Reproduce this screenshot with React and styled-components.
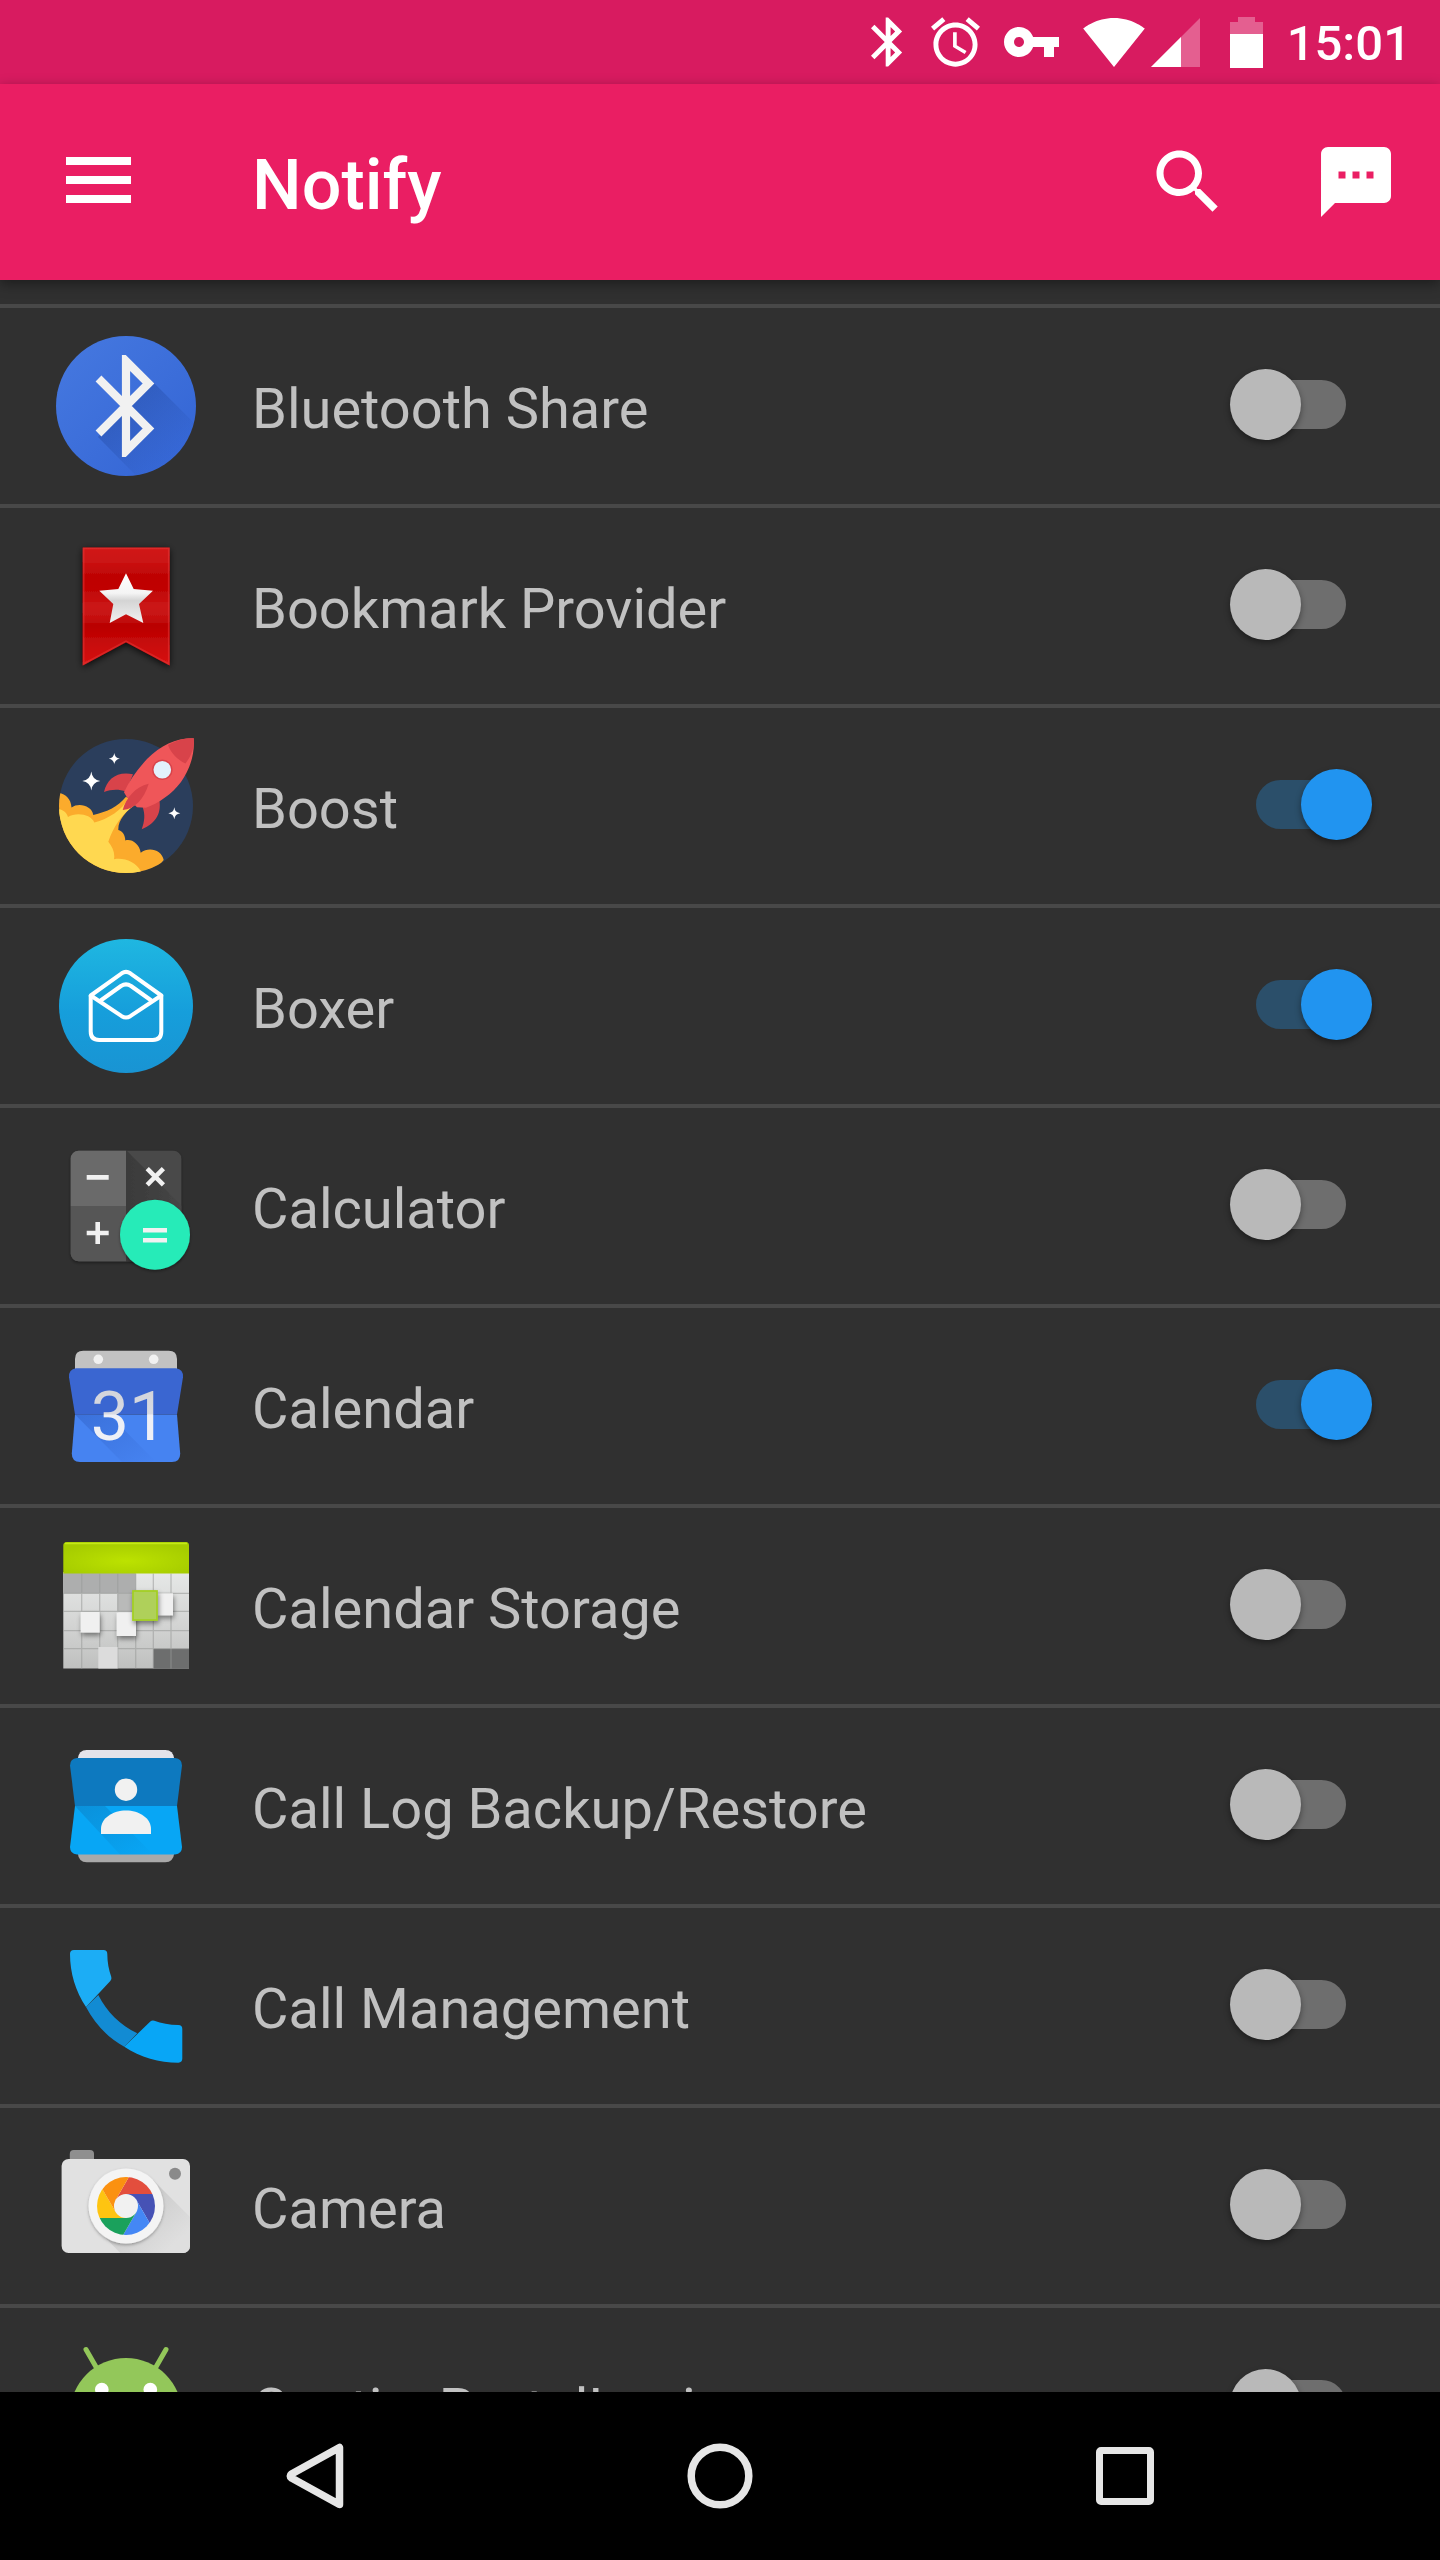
import React, { useState } from "react";
import styled, { createGlobalStyle } from "styled-components";

const PINK = "#ea1e63";
const PINK_DARK = "#d81b60";
const ACCENT = "#2194f0";

const GlobalStyle = createGlobalStyle`
  * {
    box-sizing: border-box;
  }

  body {
    margin: 0;
    background: #303030;
    font-family: Roboto, "Noto Sans", sans-serif;
  }
`;

const Screen = styled.div`
  display: flex;
  flex-direction: column;
  height: 100vh;
  background: #303030;
`;

const StatusBar = styled.div`
  flex: none;
  display: flex;
  align-items: center;
  justify-content: flex-end;
  gap: 24px;
  height: 84px;
  padding-right: 29px;
  background: ${PINK_DARK};
  color: #fff;
`;

const Signals = styled.div`
  display: flex;
  gap: 6px;
`;

const Clock = styled.time`
  padding-top: 4px;
  font-size: 49px;
  font-weight: 500;
  line-height: 60px;
`;

const AppBar = styled.header`
  position: relative;
  z-index: 1;
  flex: none;
  display: flex;
  align-items: center;
  height: 196px;
  background: ${PINK};
  color: #fff;
  box-shadow: 0 4px 12px rgba(0, 0, 0, 0.4);
`;

const BarButton = styled.button`
  display: flex;
  align-items: center;
  justify-content: center;
  width: ${props => (props.$wide ? "196px" : "168px")};
  height: 196px;
  padding: 0;
  border: 0;
  background: none;
  color: inherit;
  cursor: pointer;
`;

const Title = styled.h1`
  flex: 1;
  margin: 0;
  padding: 6px 0 0 56px;
  font-size: 70px;
  font-weight: 500;
  line-height: 84px;
`;

const AppList = styled.ul`
  flex: 1;
  min-height: 0;
  margin: 0;
  padding: 24px 0 0;
  list-style: none;
  overflow-y: auto;
  scrollbar-width: none;
`;

const AppRow = styled.li`
  display: flex;
  align-items: center;
  height: 200px;
  padding: 0 68px 0 56px;
  border-top: 4px solid #484848;
`;

const AppIcon = styled.svg`
  flex: none;
  width: 140px;
  height: 140px;
`;

const AppName = styled.label`
  flex: 1;
  padding: 6px 0 0 56px;
  color: #c1c1c1;
  font-size: 56px;
  line-height: 72px;
`;

const Switch = styled.input`
  appearance: none;
  flex: none;
  display: grid;
  align-items: center;
  width: 142px;
  height: 71px;
  margin: 0 0 3px;
  cursor: pointer;

  &::before,
  &::after {
    content: "";
    grid-area: 1 / 1;
  }

  &::before {
    justify-self: center;
    width: 90px;
    height: 49px;
    border-radius: 25px;
    background: #6e6e6e;
  }

  &::after {
    justify-self: start;
    width: 71px;
    height: 71px;
    border-radius: 50%;
    background: #b9b9b9;
    box-shadow: 0 3px 6px rgba(0, 0, 0, 0.4);
  }

  &:checked::before {
    background: #2b4f6a;
  }

  &:checked::after {
    justify-self: end;
    background: ${ACCENT};
  }
`;

const NavBar = styled.nav`
  flex: none;
  display: flex;
  height: 168px;
  padding: 0 112px;
  background: #000;
`;

const NavButton = styled.button`
  flex: 1;
  display: flex;
  align-items: center;
  justify-content: center;
  padding: 0;
  border: 0;
  background: none;
  color: #e6e6e6;
  cursor: pointer;
`;

const BluetoothShareIcon = () => (
  <AppIcon viewBox="0 0 140 140" aria-hidden="true">
    <defs>
      <linearGradient id="bt-disc" x1="0" y1="0" x2="1" y2="1">
        <stop offset="0" stopColor="#4679e0" />
        <stop offset="1" stopColor="#3364d4" />
      </linearGradient>
      <linearGradient id="bt-shade" x1="0.2" y1="0.2" x2="0.8" y2="0.8">
        <stop offset="0" stopColor="#1b3d8f" stopOpacity="0.35" />
        <stop offset="0.75" stopColor="#1b3d8f" stopOpacity="0" />
      </linearGradient>
      <clipPath id="bt-clip">
        <circle cx="70" cy="70" r="70" />
      </clipPath>
      <clipPath id="bt-glyph">
        <rect x="30" y="19" width="80" height="102" />
      </clipPath>
    </defs>
    <circle cx="70" cy="70" r="70" fill="url(#bt-disc)" />
    <path
      clipPath="url(#bt-clip)"
      fill="url(#bt-shade)"
      d="M98 47l62 62v51H100L42 101 70 70z"
    />
    <path
      clipPath="url(#bt-glyph)"
      d="M42.5 42.5l50 50L70 115V25l22.5 22.5-50 50"
      fill="none"
      stroke="#f1f1f1"
      strokeWidth="8.2"
      strokeMiterlimit="10"
    />
  </AppIcon>
);

const BookmarkIcon = () => (
  <AppIcon viewBox="0 0 140 140" aria-hidden="true">
    <defs>
      <linearGradient id="bm-ribbon" x1="0" y1="0" x2="0" y2="1">
        <stop offset="0" stopColor="#d11a1a" />
        <stop offset="0.12" stopColor="#cb1313" />
        <stop offset="0.24" stopColor="#be0404" />
        <stop offset="0.36" stopColor="#c00505" />
        <stop offset="0.5" stopColor="#cb1616" />
        <stop offset="0.6" stopColor="#c51010" />
        <stop offset="0.66" stopColor="#b90202" />
        <stop offset="0.8" stopColor="#c60808" />
        <stop offset="1" stopColor="#d81414" />
      </linearGradient>
      <linearGradient id="bm-star" x1="0" y1="0" x2="0" y2="1">
        <stop offset="0" stopColor="#ffffff" />
        <stop offset="0.4" stopColor="#f4f4f4" />
        <stop offset="0.55" stopColor="#d4d4d4" />
        <stop offset="1" stopColor="#f2f2f2" />
      </linearGradient>
      <filter id="bm-shadow" x="-20%" y="-20%" width="140%" height="140%">
        <feDropShadow dx="0" dy="2" stdDeviation="3.500" floodOpacity="0.8" />
      </filter>
    </defs>
    <path
      filter="url(#bm-shadow)"
      d="M26.7 11.5h87v118L70 106.3l-43.3 23.2z"
      fill="url(#bm-ribbon)"
    />
    <path
      d="M27.7 12.5h85v115.3L70 105.2l-42.3 22.6z"
      fill="none"
      stroke="#e53a3a"
      strokeOpacity="0.5"
      strokeWidth="1.6"
    />
    <path
      d="M70 37.3l7.7 15.7L97 54.7 83 68l4.3 19L70 78.3 53.7 87l3.6-19-14-13.3L62.3 53z"
      fill="url(#bm-star)"
    />
  </AppIcon>
);

const BoostIcon = () => (
  <AppIcon viewBox="0 0 140 140" aria-hidden="true">
    <defs>
      <clipPath id="boost-clip">
        <circle cx="70" cy="70" r="67" />
      </clipPath>
    </defs>
    <circle cx="70" cy="70" r="67" fill="#2b3e5c" />
    <g clipPath="url(#boost-clip)">
      <path
        fill="#fbab2c"
        d="M0 57c8-1 15 5 15.500 14.500C23 66 36 70 37.300 79 50 76 62 71 70 60.700L80 68C70 75 62 84 62.300 94c4 1 7 5 7 10.500 6-2 14 3 15.400 12.200C93 110 106 114 107.700 124L90 145H0z"
      />
      <path
        fill="#ffd850"
        d="M0 73c5 0 10 2 12 8 8-5 23-3 26.300 5.500C52 83 67 74 72 62l8 6C66 77 57 92 52.300 105.700c4 5 7 11 5.700 17.600 9-2 22 2 27 12.400V145H0z"
      />
    </g>
    <g fill="#fff">
      <path d="M35.300 35.500q1 8.500 9 9.500-8 1-9 9.500-1-8.500-9-9.500 8-1 9-9.500z" />
      <path d="M58.300 17q.6 5 5.500 5.700-4.900.7-5.500 5.700-.6-5-5.500-5.700 4.900-.7 5.500-5.700z" />
      <path d="M118.300 71.300q.6 5.300 6 6-5.400.7-6 6-.6-5.300-6-6 5.400-.7 6-6z" />
    </g>
    <path
      fill="#d8434a"
      d="M48 56c3-13 13-21 29-17.700L70 55.700c-8-3-15-2-22 .3zM103 62c3 14-2 25-17.300 31.300 3-8 3.500-15 1-22z"
    />
    <path
      fill="#ef5659"
      d="M137.700 2.300C120 2 105 9 91 23 81 34 73 45 68 56.300l3 5.200 10 9.800 9 .4C103 67 116 58 125 46c9-13 14-28 12.700-43.700z"
    />
    <path
      fill="#d8434a"
      d="M137.700 2.300C128 2 120 4.500 112 9c3 8 9 14.500 17.500 18.500 6-8 9-16 8.200-25.200zM92.700 47.700C79 51 70 62 66.700 74 79 73 88 63 92.700 47.700z"
    />
    <circle cx="106.300" cy="33.700" r="10.300" fill="#d8434a" />
    <circle cx="106.300" cy="33.700" r="8.800" fill="#e2f1fc" />
  </AppIcon>
);

const BoxerIcon = () => (
  <AppIcon viewBox="0 0 140 140" aria-hidden="true">
    <defs>
      <linearGradient id="boxer-disc" x1="0" y1="0" x2="0" y2="1">
        <stop offset="0" stopColor="#1fb7e1" />
        <stop offset="0.55" stopColor="#169edb" />
        <stop offset="1" stopColor="#1994d3" />
      </linearGradient>
    </defs>
    <circle cx="70" cy="70" r="67" fill="url(#boxer-disc)" />
    <g fill="none" stroke="#fff" strokeWidth="4" strokeLinejoin="round">
      <path d="M34.700 59.500v36q0 8.500 8.500 8.500h53.600q8.500 0 8.500-8.500v-36" />
      <path d="M34.700 59.500l31-22.200q4.300-2.800 8.600 0l31 22.200-31 20.700q-4.300 2.600-8.600 0z" />
      <path d="M44 65l21-15q5-3.200 10 0l21 15" />
    </g>
  </AppIcon>
);

const CalculatorIcon = () => (
  <AppIcon viewBox="0 0 140 140" aria-hidden="true">
    <defs>
      <clipPath id="calc-clip">
        <rect x="14.700" y="14.700" width="110.600" height="110.600" rx="8" />
      </clipPath>
      <linearGradient id="calc-shade" x1="0" y1="0" x2="1" y2="0">
        <stop offset="0" stopColor="#3a3a3a" />
        <stop offset="1" stopColor="#464646" />
      </linearGradient>
      <filter id="calc-shadow" x="-20%" y="-20%" width="140%" height="140%">
        <feDropShadow dx="0" dy="1.5" stdDeviation="1.5" floodOpacity="0.4" />
      </filter>
    </defs>
    <g filter="url(#calc-shadow)">
      <g clipPath="url(#calc-clip)">
        <path d="M14 14h112v112H14z" fill="#484848" />
        <path d="M70 14l56 56v56H70z" fill="url(#calc-shade)" />
        <path d="M14 14h56v56H14z" fill="#6b6b6b" />
        <path d="M14 70h56v56H14z" fill="#575757" />
      </g>
    </g>
    <circle
      cx="99"
      cy="98.700"
      r="35"
      fill="#26ebb8"
      filter="url(#calc-shadow)"
    />
    <g fill="none" stroke="#f1f1f1" strokeWidth="4.600">
      <path d="M30.700 41.400h22M30.700 97h22M41.700 86v22" />
      <path d="M91.200 32.600l16.200 16.200M107.400 32.600L91.200 48.800" />
      <path d="M87 94.200h24M87 104.200h24" />
    </g>
  </AppIcon>
);

const CalendarIcon = () => (
  <AppIcon viewBox="0 0 140 140" aria-hidden="true">
    <defs>
      <linearGradient
        id="cal-ink"
        gradientUnits="userSpaceOnUse"
        x1="0"
        y1="52"
        x2="0"
        y2="104"
      >
        <stop offset="0" stopColor="#d2d4da" />
        <stop offset="0.5" stopColor="#d8dae2" />
        <stop offset="0.52" stopColor="#eef0f6" />
        <stop offset="1" stopColor="#eef0f6" />
      </linearGradient>
      <linearGradient id="cal-shade" x1="0" y1="0" x2="1" y2="1">
        <stop offset="0" stopColor="#2f5fc4" stopOpacity="0.5" />
        <stop offset="1" stopColor="#2f5fc4" stopOpacity="0" />
      </linearGradient>
    </defs>
    <path d="M19 36V23q0-8.300 8.300-8.300h85.400q8.300 0 8.300 8.300v13z" fill="#c2c2c2" />
    <circle cx="42.300" cy="23.300" r="4.800" fill="#f1f1f1" />
    <circle cx="97.700" cy="23.300" r="4.800" fill="#f1f1f1" />
    <path
      d="M19 78.500h102l3.200 39q0 8.500-8.200 8.500H24q-8.200 0-8.200-8.500z"
      fill="#4683f1"
    />
    <path d="M19 78.500h34l47 47.500H66z" fill="url(#cal-shade)" />
    <path
      d="M20 32.300h100q7.500 1 7 9l-6 37.200H19L13 41.300q-.5-8 7-9z"
      fill="#3a66d1"
    />
    <text
      x="73"
      y="103.500"
      textAnchor="middle"
      fontFamily="Roboto, sans-serif"
      fontSize="68"
      fill="url(#cal-ink)"
    >
      31
    </text>
  </AppIcon>
);

const CalendarStorageIcon = () => (
  <AppIcon viewBox="0 0 140 140" aria-hidden="true">
    <defs>
      <linearGradient id="cs-cells" x1="0" y1="0" x2="0" y2="1">
        <stop offset="0" stopColor="#e6e8e7" />
        <stop offset="0.5" stopColor="#d5d6d5" />
        <stop offset="1" stopColor="#bfc0bf" />
      </linearGradient>
      <radialGradient id="cs-head" cx="0.5" cy="0.6" r="0.6">
        <stop offset="0" stopColor="#bce200" />
        <stop offset="1" stopColor="#a6cc00" />
      </radialGradient>
      <filter id="cs-shadow" x="-40%" y="-40%" width="180%" height="200%">
        <feDropShadow dx="1" dy="3" stdDeviation="2.500" floodOpacity="0.45" />
      </filter>
    </defs>
    <rect x="7.300" y="36" width="125.700" height="96.500" fill="url(#cs-cells)" />
    <path d="M7.300 37h72.400v20.300H7.300z" fill="#adaeae" />
    <path d="M61.700 57.300h18v18h-18z" fill="#b9bab9" />
    <path d="M97.300 112.700H133v19.800H97.300z" fill="#6d6e6e" />
    <path
      d="M25.700 37.500v95M43.700 37.500v95M61.700 37.500v95M79.700 37.500v95M97.300 37.500v95M115 37.500v95M7.300 57.300H133M7.300 75.300H133M7.300 94.700H133M7.300 112.700H133"
      stroke="#9a9b9a"
      strokeOpacity="0.6"
      strokeWidth="1.200"
    />
    <path
      d="M7.300 37.500V9.500q0-3.500 3.500-3.500H130q3 0 3 3.500v28z"
      fill="url(#cs-head)"
    />
    <path d="M9 7.500h122" stroke="#c4e818" strokeWidth="1.500" />
    <rect x="42.300" y="111" width="19.300" height="21.500" fill="#dcdcdc" />
    <g filter="url(#cs-shadow)" fill="#f0f0f0">
      <rect x="24.700" y="76" width="19" height="20.500" />
      <rect x="60.700" y="76.300" width="19.300" height="23.700" />
      <rect x="101.300" y="57.300" width="15.700" height="22" />
    </g>
    <rect
      x="77"
      y="55"
      width="24"
      height="29"
      fill="#afd05a"
      stroke="#a3cf24"
      strokeWidth="1.800"
      filter="url(#cs-shadow)"
    />
  </AppIcon>
);

const ContactsIcon = () => (
  <AppIcon viewBox="0 0 140 140" aria-hidden="true">
    <defs>
      <linearGradient id="ct-shade" x1="0" y1="0" x2="1" y2="1">
        <stop offset="0" stopColor="#0b82c8" stopOpacity="0.6" />
        <stop offset="1" stopColor="#0b82c8" stopOpacity="0" />
      </linearGradient>
    </defs>
    <path d="M21.700 30v-7q1-9 9-9h78.600q8 0 9 9v7z" fill="#e3e3ea" />
    <path d="M21.700 110v7q1 9.300 9 9.300h78.600q8 0 9-9.300v-7z" fill="#a9a9a9" />
    <path
      d="M19 70h102l5 41q0 7-7 7.500H21q-7-.5-7-7.500z"
      fill="#08a6f5"
    />
    <path d="M19 70h30l48 48.500H64z" fill="url(#ct-shade)" />
    <path
      d="M21 22h98q7 .5 7 7.500l-5 40.500H19l-5-40.500q0-7 7-7.500z"
      fill="#0d79bf"
    />
    <circle cx="70" cy="53.700" r="11.200" fill="#f1f1f1" />
    <path d="M45 98v-5c0-11 12-18.500 25-18.500S95 82 95 93v5z" fill="#f1f1f1" />
  </AppIcon>
);

const PhoneIcon = () => (
  <AppIcon viewBox="0 0 140 140" aria-hidden="true">
    <path
      d="M42.300 59C51 76 64 89 81.300 97.300l-13 13.400C52 102 39 88 30 71z"
      fill="#128bd3"
    />
    <path
      d="M18 14h29.500q3.800 0 3.800 4c0 8 1.500 16 4 23q.7 2.300-1 4L30 71C19.500 55 14 37 14 18q0-4 4-4z"
      fill="#1cadf5"
    />
    <path
      d="M68.300 110.700l26-25.200q1.700-1.500 4-.8c7 2.700 15 4.100 24 4.200q4 0 4 4v29.700q0 4-4 4.200c-19 0-38-5.500-54-16.100z"
      fill="#08a6f6"
    />
  </AppIcon>
);

const BLADES = ["#e34e3d", "#4652b5", "#4487f5", "#1aa15c", "#fec411", "#fb9110"];

const CameraIcon = () => (
  <AppIcon viewBox="0 0 140 140" aria-hidden="true">
    <defs>
      <clipPath id="cam-lens">
        <circle cx="70" cy="70" r="29" />
      </clipPath>
      <clipPath id="cam-body">
        <rect x="5.600" y="23" width="128.400" height="94" rx="7" />
      </clipPath>
      <linearGradient id="cam-shade" x1="0.2" y1="0.2" x2="0.8" y2="0.8">
        <stop offset="0" stopColor="#c4c4c4" />
        <stop offset="1" stopColor="#dfdfdf" />
      </linearGradient>
      <filter id="cam-shadow" x="-20%" y="-20%" width="140%" height="140%">
        <feDropShadow dx="0" dy="1.500" stdDeviation="1.500" floodOpacity="0.3" />
      </filter>
    </defs>
    <path d="M13.800 24v-6q0-4 4-4H34q4 0 4 4v6z" fill="#8f8f8f" />
    <rect x="5.600" y="23" width="128.400" height="94" rx="7" fill="#e1e1e1" />
    <path
      clipPath="url(#cam-body)"
      fill="url(#cam-shade)"
      d="M97 44l40 40v40H71L44 96z"
    />
    <circle
      cx="70"
      cy="70"
      r="37.500"
      fill="#f4f4f4"
      filter="url(#cam-shadow)"
    />
    <g clipPath="url(#cam-lens)">
      {BLADES.map((color, index) => (
        <path
          key={color}
          d="M59.600 64l20-34.600L110 20v38H70l-4 8z"
          fill={color}
          transform={`rotate(${index * 60} 70 70)`}
        />
      ))}
    </g>
    <circle cx="70" cy="70" r="12" fill="#f1f1f1" />
    <circle cx="119" cy="37.700" r="6" fill="#8a8a8a" />
  </AppIcon>
);

const AndroidIcon = () => (
  <AppIcon viewBox="0 0 140 140" aria-hidden="true">
    <path
      d="M30 13.500l11.500 20M110 13.500l-11.500 20"
      stroke="#93c75a"
      strokeWidth="5"
      strokeLinecap="round"
    />
    <path d="M14 78a56 56 0 01112 0v4H14z" fill="#93c75a" />
    <circle cx="45.800" cy="53.500" r="6.800" fill="#fff" />
    <circle cx="94.300" cy="53.500" r="6.800" fill="#fff" />
  </AppIcon>
);

const APPS = [
  { id: "bluetooth-share", name: "Bluetooth Share", Icon: BluetoothShareIcon },
  { id: "bookmark-provider", name: "Bookmark Provider", Icon: BookmarkIcon },
  { id: "boost", name: "Boost", Icon: BoostIcon },
  { id: "boxer", name: "Boxer", Icon: BoxerIcon },
  { id: "calculator", name: "Calculator", Icon: CalculatorIcon },
  { id: "calendar", name: "Calendar", Icon: CalendarIcon },
  { id: "calendar-storage", name: "Calendar Storage", Icon: CalendarStorageIcon },
  { id: "call-log", name: "Call Log Backup/Restore", Icon: ContactsIcon },
  { id: "call-management", name: "Call Management", Icon: PhoneIcon },
  { id: "camera", name: "Camera", Icon: CameraIcon },
  { id: "captive-portal", name: "CaptivePortalLogin", Icon: AndroidIcon }
];

const StatusIcons = () => (
  <>
    <svg width="36" height="50" viewBox="5 2 14.700 20" fill="currentColor">
      <path d="M17.710 7.710L12 2h-1v7.590L6.410 5 5 6.410 10.590 12 5 17.590 6.410 19 11 14.410V22h1l5.710-5.710-4.300-4.290 4.300-4.290zM13 5.830l1.880 1.880L13 9.590V5.830zm1.880 10.460L13 18.170v-3.760l1.880 1.880z" />
    </svg>
    <svg width="49" height="50" viewBox="2 1.860 20 20.140" fill="currentColor">
      <path d="M22 5.720l-4.600-3.860-1.290 1.530 4.600 3.860L22 5.720zM7.880 3.390L6.600 1.860 2 5.710l1.290 1.530 4.590-3.850zM12.500 8H11v6l4.750 2.850.75-1.230-4-2.370V8zM12 4c-4.970 0-9 4.030-9 9s4.020 9 9 9c4.970 0 9-4.030 9-9s-4.030-9-9-9zm0 16c-3.870 0-7-3.130-7-7s3.130-7 7-7 7 3.130 7 7-3.130 7-7 7z" />
    </svg>
    <svg width="55" height="30" viewBox="1 6 22 12" fill="currentColor">
      <path d="M12.650 10C11.830 7.670 9.610 6 7 6c-3.310 0-6 2.690-6 6s2.690 6 6 6c2.610 0 4.830-1.670 5.650-4H17v4h4v-4h2v-4H12.650zM7 14c-1.100 0-2-.9-2-2s.9-2 2-2 2 .9 2 2-.9 2-2 2z" />
    </svg>
    <Signals>
      <svg width="62" height="49" viewBox="0.360 3 23.280 18.500" fill="currentColor">
        <path d="M12.010 21.490L23.640 7c-.45-.34-4.930-4-11.640-4C5.280 3 .81 6.660.36 7l11.630 14.490.01.010.01-.010z" />
      </svg>
      <svg width="55" height="49" viewBox="0 0 55 49" fill="currentColor">
        <path d="M0 49L49 0v49z" opacity="0.3" />
        <path d="M0 49l30-30v30z" />
      </svg>
    </Signals>
    <svg width="33" height="51" viewBox="0 0 33 51" fill="currentColor">
      <path d="M0 5h8V0h17v5h8v12H0z" opacity="0.3" />
      <path d="M0 17h33v34H0z" />
    </svg>
  </>
);

const App = () => {
  const [enabled, setEnabled] = useState({
    boost: true,
    boxer: true,
    calendar: true
  });

  const handleToggle = evt => {
    const { name, checked } = evt.target;
    setEnabled(current => ({ ...current, [name]: checked }));
  };

  return (
    <Screen>
      <GlobalStyle />
      <StatusBar>
        <StatusIcons />
        <Clock>15:01</Clock>
      </StatusBar>
      <AppBar>
        <BarButton type="button" aria-label="Open menu" $wide>
          <svg width="66" height="50" viewBox="0 0 66 50" fill="currentColor">
            <path d="M1 0h65v8H1zM1 19h65v8H1zM1 38h65v8H1z" />
          </svg>
        </BarButton>
        <Title>Notify</Title>
        <BarButton type="button" aria-label="Search">
          <svg width="84" height="84" viewBox="0 0 24 24" fill="currentColor">
            <path d="M15.500 14h-.79l-.28-.27C15.410 12.590 16 11.110 16 9.500 16 5.910 13.090 3 9.500 3S3 5.910 3 9.500 5.910 16 9.500 16c1.610 0 3.090-.59 4.230-1.570l.27.28v.79l5 4.990L20.490 19l-4.990-5zm-6 0C7.010 14 5 11.990 5 9.500S7.010 5 9.500 5 14 7.010 14 9.500 11.990 14 9.500 14z" />
          </svg>
        </BarButton>
        <BarButton type="button" aria-label="Messages">
          <svg width="84" height="84" viewBox="0 0 24 24" fill="currentColor">
            <path d="M20 2H4c-1.100 0-1.990.9-1.990 2L2 22l4-4h14c1.100 0 2-.9 2-2V4c0-1.100-.9-2-2-2zM9 11H7V9h2v2zm4 0h-2V9h2v2zm4 0h-2V9h2v2z" />
          </svg>
        </BarButton>
      </AppBar>
      <AppList>
        {APPS.map(({ id, name, Icon }) => (
          <AppRow key={id}>
            <Icon />
            <AppName htmlFor={id}>{name}</AppName>
            <Switch
              type="checkbox"
              role="switch"
              id={id}
              name={id}
              checked={!!enabled[id]}
              onChange={handleToggle}
            />
          </AppRow>
        ))}
      </AppList>
      <NavBar>
        <NavButton type="button" aria-label="Back">
          <svg
            width="66"
            height="66"
            viewBox="0 0 66 66"
            fill="none"
            stroke="currentColor"
            strokeWidth="7.500"
            strokeLinejoin="round"
          >
            <path d="M57.500 4.500v57L9.500 35q-2.500-2 0-4z" />
          </svg>
        </NavButton>
        <NavButton type="button" aria-label="Home">
          <svg width="66" height="66" viewBox="0 0 66 66">
            <circle
              cx="33"
              cy="33"
              r="28.800"
              fill="none"
              stroke="currentColor"
              strokeWidth="7.500"
            />
          </svg>
        </NavButton>
        <NavButton type="button" aria-label="Recent apps">
          <svg width="58" height="58" viewBox="0 0 58 58">
            <rect
              x="3.500"
              y="3.500"
              width="51"
              height="51"
              rx="1.500"
              fill="none"
              stroke="currentColor"
              strokeWidth="7"
            />
          </svg>
        </NavButton>
      </NavBar>
    </Screen>
  );
};

export default App;
